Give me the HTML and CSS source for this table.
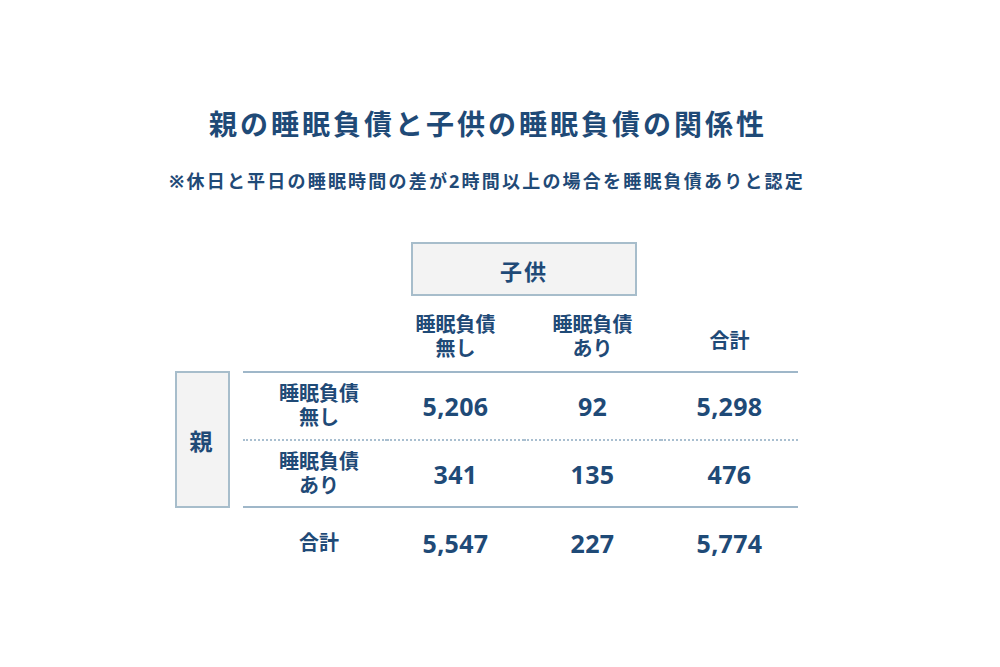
FILE: index.html
```html
<!DOCTYPE html>
<html lang="ja">
<head>
<meta charset="utf-8">
<title>親の睡眠負債と子供の睡眠負債の関係性</title>
<link rel="stylesheet" href="styles.css">
</head>
<body>
<main class="page">
  <h1 class="title">親の睡眠負債と子供の睡眠負債の関係性</h1>
  <p class="note">※休日と平日の睡眠時間の差が2時間以上の場合を睡眠負債ありと認定</p>

  <div class="matrix">
    <div class="child-box">子供</div>

    <div class="head c1"><span>睡眠負債<br>無し</span></div>
    <div class="head c2"><span>睡眠負債<br>あり</span></div>
    <div class="head c3 head-total"><span>合計</span></div>

    <div class="parent-box">親</div>

    <div class="cell r1 label">睡眠負債<br>無し</div>
    <div class="cell r1 num c1">5,206</div>
    <div class="cell r1 num c2">92</div>
    <div class="cell r1 num c3">5,298</div>

    <div class="cell r2 label">睡眠負債<br>あり</div>
    <div class="cell r2 num c1">341</div>
    <div class="cell r2 num c2">135</div>
    <div class="cell r2 num c3">476</div>

    <div class="cell r3 label">合計</div>
    <div class="cell r3 num c1">5,547</div>
    <div class="cell r3 num c2">227</div>
    <div class="cell r3 num c3">5,774</div>
  </div>
</main>
</body>
</html>
```

FILE: styles.css
```css
html, body {
  margin: 0;
  padding: 0;
  background: #ffffff;
}

body {
  font-family: "Noto Sans", "Noto Sans CJK JP", sans-serif;
  color: #1f4a77;
  font-weight: 700;
}

.page {
  width: 1000px;
  height: 667px;
  padding-top: 106px;
  box-sizing: border-box;
}

.title {
  margin: 0 24px 0 0;
  font-size: 28px;
  line-height: 36px;
  letter-spacing: 3px;
  text-align: center;
  font-weight: 700;
}

.note {
  margin: 27px 26px 0 0;
  font-size: 18px;
  line-height: 24px;
  letter-spacing: 2.2px;
  text-align: center;
}

.matrix {
  margin: 49px 0 0 175px;
  display: grid;
  grid-template-columns: 55px 13px 144px 137px 137px 137px;
  grid-template-rows: 54px 75px 70px 67px 70px;
}

.child-box {
  grid-column: 4 / 6;
  grid-row: 1;
  margin: 0 24px;
  border: 2px solid #a7bdcb;
  background: #f3f3f3;
  display: flex;
  align-items: center;
  justify-content: center;
  font-size: 22px;
  letter-spacing: 2px;
  padding-top: 2px;
}

.head {
  grid-row: 2;
  display: flex;
  align-items: flex-end;
  justify-content: center;
  padding-bottom: 10px;
  font-size: 20px;
  line-height: 24px;
  text-align: center;
}

.head-total { padding-bottom: 18px; }

.c1 { grid-column: 4; }
.c2 { grid-column: 5; }
.c3 { grid-column: 6; }

.parent-box {
  grid-column: 1;
  grid-row: 3 / 5;
  border: 2px solid #a7bdcb;
  background: #f3f3f3;
  display: flex;
  align-items: center;
  justify-content: center;
  font-size: 23px;
  padding-right: 3px;
}

.cell {
  display: flex;
  align-items: center;
  justify-content: center;
  text-align: center;
}

.cell.label {
  grid-column: 3;
  font-size: 20px;
  line-height: 24px;
  padding-left: 8px;
}

.cell.num {
  font-size: 25px;
  letter-spacing: 0.3px;
}

.r1 {
  grid-row: 3;
  border-top: 2px solid #9fb7c9;
  border-bottom: 2px dotted #a9bfd0;
}

.r2 {
  grid-row: 4;
  border-bottom: 2px solid #9fb7c9;
}

.r3 {
  grid-row: 5;
}
```
